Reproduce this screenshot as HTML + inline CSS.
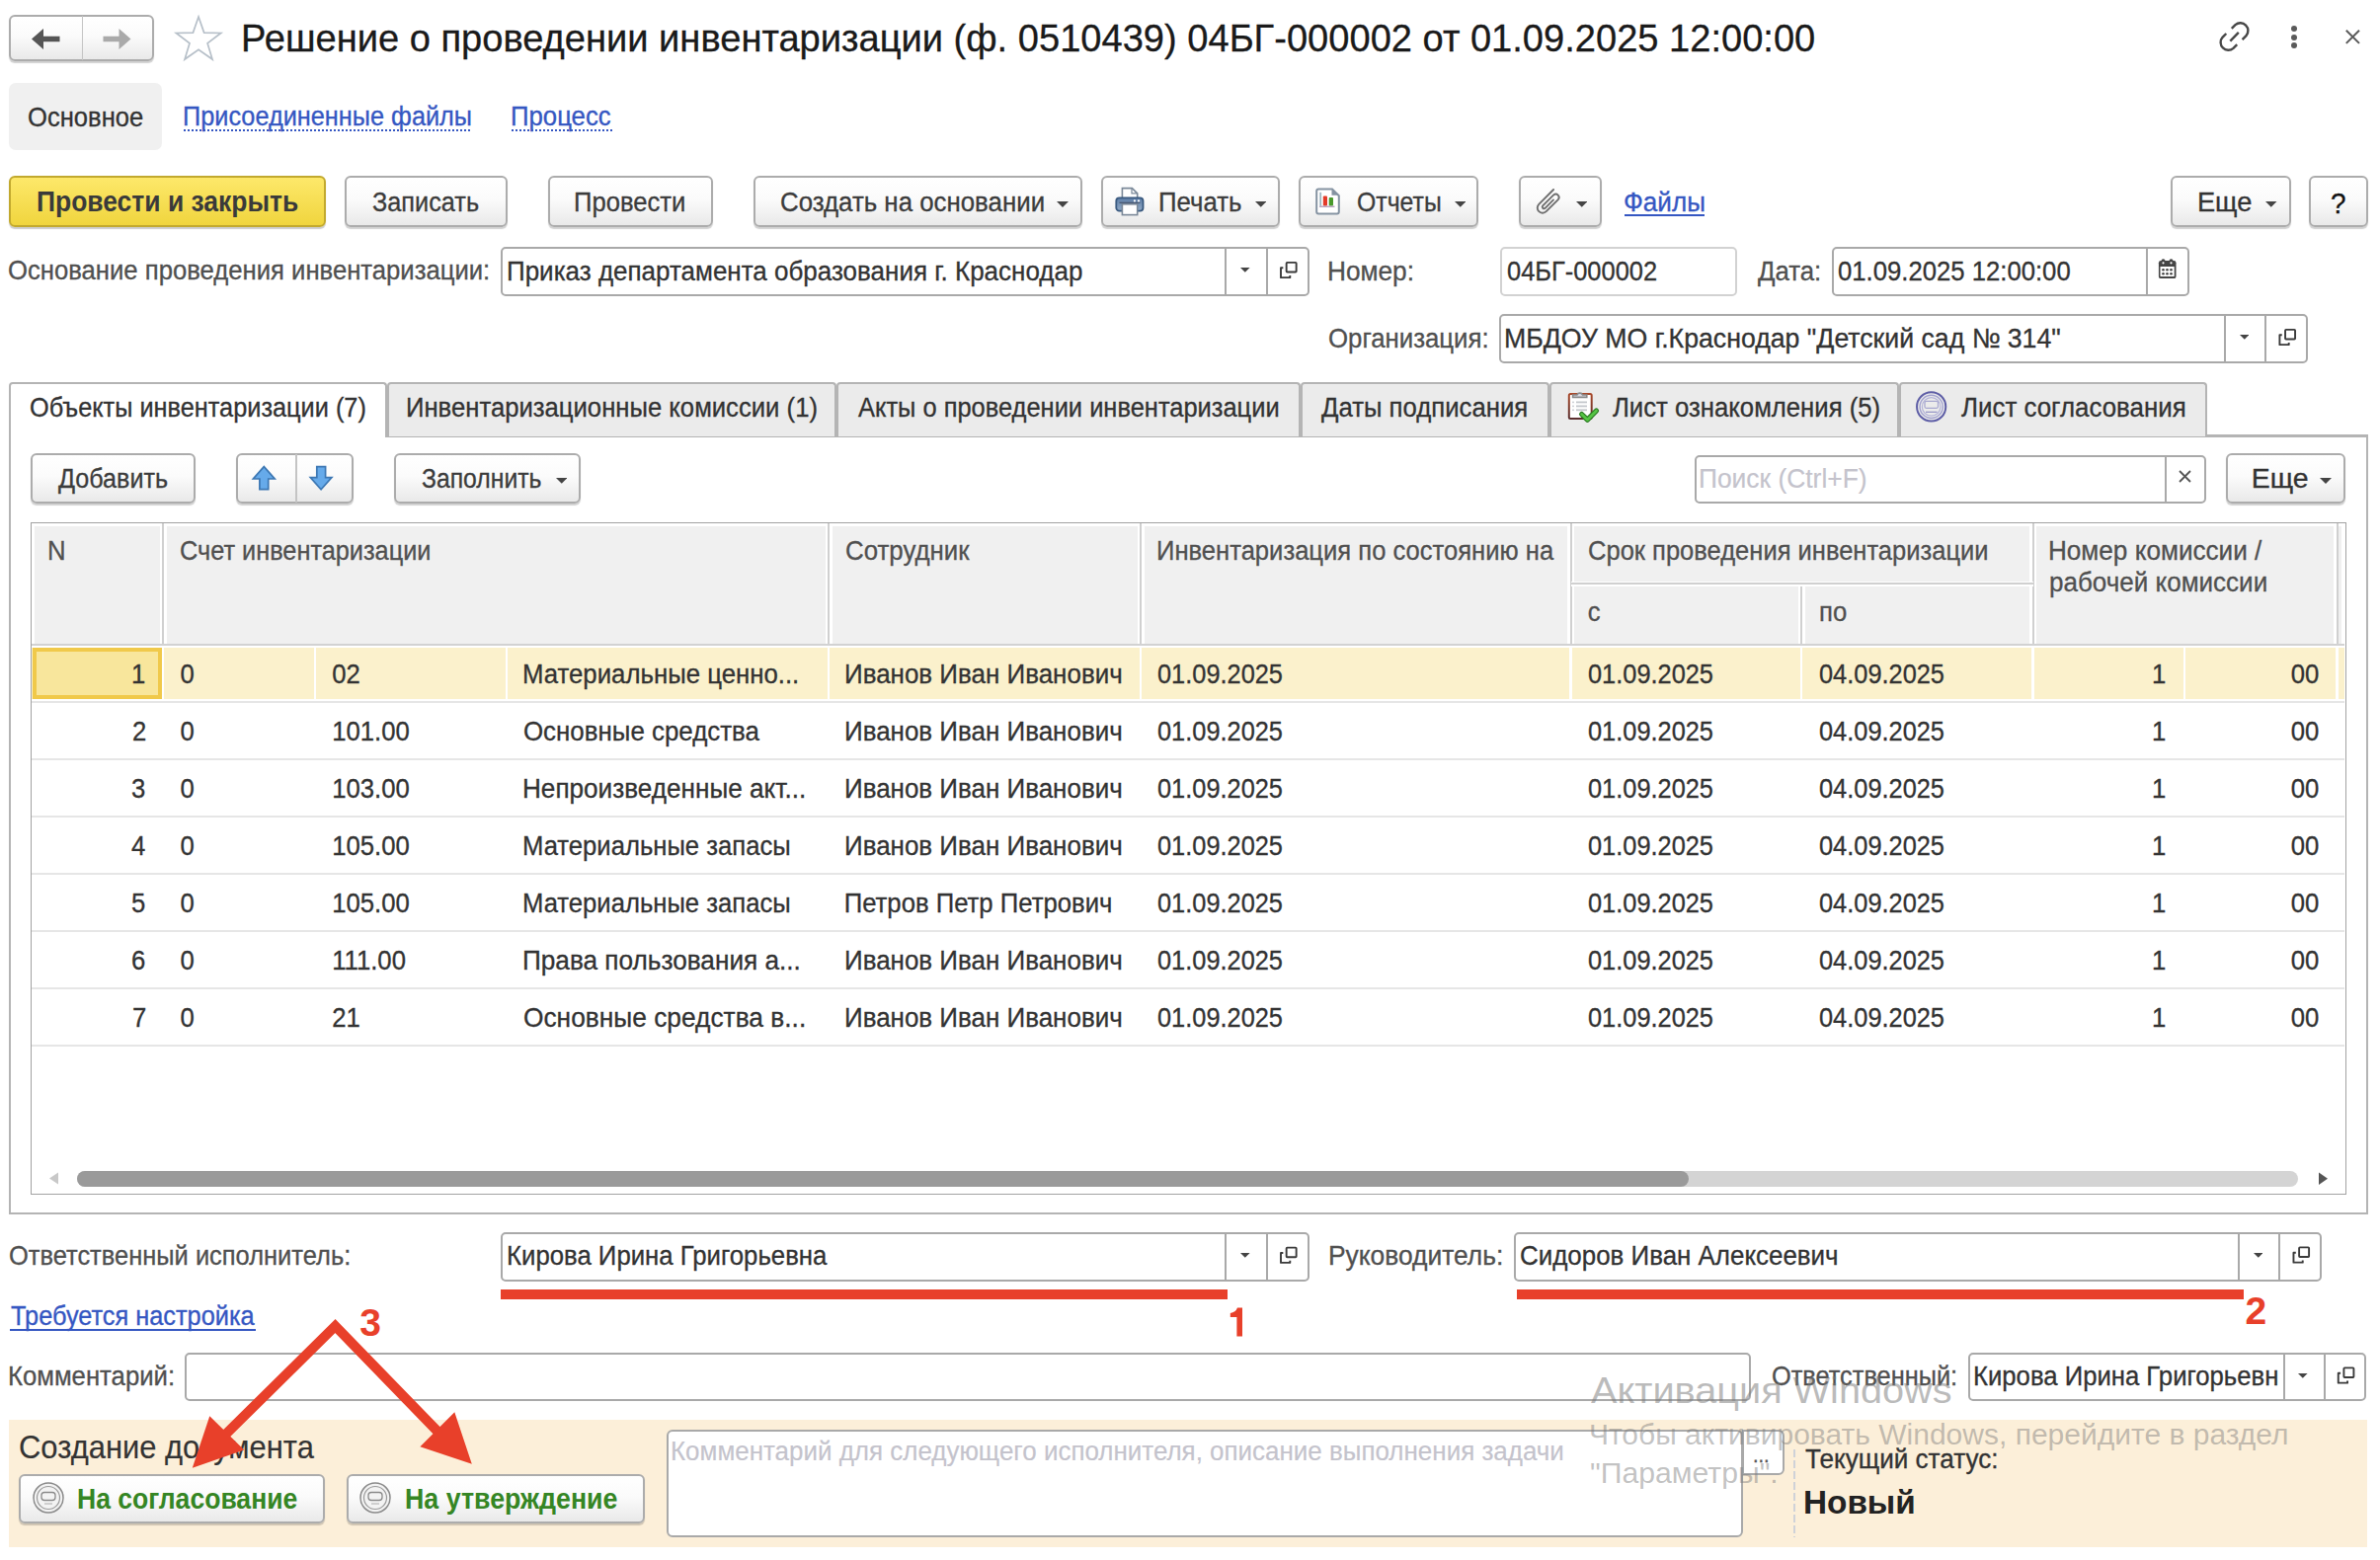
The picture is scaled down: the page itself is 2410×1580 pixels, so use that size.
<!DOCTYPE html>
<html><head><meta charset="utf-8"><title>1C</title>
<style>
html,body{margin:0;padding:0;background:#fff;width:2410px;height:1580px;overflow:hidden;position:relative}
.t{position:absolute;white-space:pre;line-height:1;font-family:"Liberation Sans", sans-serif;-webkit-text-stroke:0.3px currentColor}
</style></head><body>
<div style="position:absolute;left:9px;top:15px;width:147px;height:47px;box-sizing:border-box;border:2px solid #acacac;border-radius:6px;background:linear-gradient(#ffffff 0%,#fbfbfb 45%,#e9e9e9 100%);box-shadow:0 1.5px 1px rgba(0,0,0,0.18);"></div>
<div style="position:absolute;left:82.5px;top:16px;width:1.5px;height:45px;box-sizing:border-box;background:#c4c4c4"></div>
<svg style="position:absolute;left:30px;top:27px" width="34" height="26" viewBox="0 0 34 26"><path d="M2 12.5 L14 2 L14 9.8 L30.5 9.8 L30.5 15.2 L14 15.2 L14 23 Z" fill="#555"/></svg>
<svg style="position:absolute;left:103px;top:27px" width="34" height="26" viewBox="0 0 34 26"><path d="M29.5 12.5 L17.5 2 L17.5 9.8 L1.5 9.8 L1.5 15.2 L17.5 15.2 L17.5 23 Z" fill="#aaa"/></svg>
<svg style="position:absolute;left:0;top:0" width="260" height="80"><polygon points="201.05,17.00 206.65,33.10 223.69,33.45 210.10,43.74 215.04,60.05 201.05,50.32 187.06,60.05 192.00,43.74 178.41,33.45 195.45,33.10" fill="none" stroke="#b7c0c9" stroke-width="1.7" stroke-linejoin="miter"/></svg>
<span class="t" style="left:244.00px;top:19.93px;font-size:38.08px;font-weight:400;color:#1a1a1a;">Решение о проведении инвентаризации (ф. 0510439) 04БГ-000002 от 01.09.2025 12:00:00</span>
<svg style="position:absolute;left:0;top:0" width="2410" height="80" viewBox="0 0 2410 80"><g fill="none" stroke="#474747" stroke-width="2.4" stroke-linecap="butt"><path d="M2259.8 28.9 L2263.5 25.2 A7.8 7.8 0 0 1 2274.5 36.2 L2270.6 40.1"/><path d="M2265.2 45.1 L2261.5 48.8 A7.8 7.8 0 0 1 2250.5 37.8 L2254.3 34.0"/><path d="M2258.3 41.7 L2266.8 32.9"/></g></svg>
<div style="position:absolute;left:2319.5px;top:26.3px;width:6px;height:6px;border-radius:50%;background:#5a5a5a"></div>
<div style="position:absolute;left:2319.5px;top:34.5px;width:6px;height:6px;border-radius:50%;background:#5a5a5a"></div>
<div style="position:absolute;left:2319.5px;top:42.6px;width:6px;height:6px;border-radius:50%;background:#5a5a5a"></div>
<svg style="position:absolute;left:2370px;top:25px" width="26" height="26" viewBox="0 0 26 26"><path d="M5.8 5.7 L19 18.9 M19 5.7 L5.8 18.9" stroke="#5a5a5a" stroke-width="2"/></svg>
<div style="position:absolute;left:9px;top:84px;width:155px;height:68px;box-sizing:border-box;background:#f0f0f0;border-radius:7px"></div>
<span class="t" style="left:28.00px;top:106.85px;font-size:25.7px;font-weight:400;color:#333;transform:scale(0.9964,1.0800);transform-origin:1.00px 21.84px;">Основное</span>
<span class="t" style="left:185.00px;top:106.25px;font-size:25.7px;font-weight:400;color:#3557c2;transform:scale(0.9848,1.0800);transform-origin:2.00px 21.84px;">Присоединенные файлы</span>
<div style="position:absolute;left:186px;top:130.5px;width:291px;height:2.0px;box-sizing:border-box;background-image:linear-gradient(to right,#3557c2 50%,transparent 50%);background-size:4px 2px"></div>
<span class="t" style="left:517.00px;top:106.25px;font-size:25.7px;font-weight:400;color:#3557c2;transform:scale(1.0021,1.0800);transform-origin:2.00px 21.84px;">Процесс</span>
<div style="position:absolute;left:518px;top:130.5px;width:102px;height:2.0px;box-sizing:border-box;background-image:linear-gradient(to right,#3557c2 50%,transparent 50%);background-size:4px 2px"></div>
<div style="position:absolute;left:9px;top:178px;width:320.5px;height:52px;box-sizing:border-box;border:2px solid #c2a92e;border-radius:6px;background:linear-gradient(#fde86a,#f0d53e);box-shadow:0 1.5px 1px rgba(0,0,0,0.2)"></div>
<span class="t" style="left:36.80px;top:192.19px;font-size:26.6px;font-weight:700;color:#3a3a3a;transform:scale(0.9948,1.0900);transform-origin:1.00px 22.61px;-webkit-text-stroke:0;">Провести и закрыть</span>
<div style="position:absolute;left:349px;top:178px;width:164.5px;height:52px;box-sizing:border-box;border:2px solid #acacac;border-radius:6px;background:linear-gradient(#ffffff 0%,#fbfbfb 45%,#e9e9e9 100%);box-shadow:0 1.5px 1px rgba(0,0,0,0.18);"></div>
<span class="t" style="left:377.30px;top:192.96px;font-size:25.7px;font-weight:400;color:#3c3c3c;transform:scale(0.9845,1.0800);transform-origin:0.00px 21.84px;">Записать</span>
<div style="position:absolute;left:555px;top:178px;width:166.5px;height:52px;box-sizing:border-box;border:2px solid #acacac;border-radius:6px;background:linear-gradient(#ffffff 0%,#fbfbfb 45%,#e9e9e9 100%);box-shadow:0 1.5px 1px rgba(0,0,0,0.18);"></div>
<span class="t" style="left:581.00px;top:192.96px;font-size:25.7px;font-weight:400;color:#3c3c3c;transform:scale(0.9974,1.0800);transform-origin:2.00px 21.84px;">Провести</span>
<div style="position:absolute;left:763px;top:178px;width:332.5px;height:52px;box-sizing:border-box;border:2px solid #acacac;border-radius:6px;background:linear-gradient(#ffffff 0%,#fbfbfb 45%,#e9e9e9 100%);box-shadow:0 1.5px 1px rgba(0,0,0,0.18);"></div>
<span class="t" style="left:790.00px;top:192.96px;font-size:25.7px;font-weight:400;color:#3c3c3c;transform:scale(1.0059,1.0800);transform-origin:1.00px 21.84px;">Создать на основании</span>
<svg style="position:absolute;left:1070px;top:203.5px" width="12" height="7.0"><polygon points="0,0 12,0 6.0,6.0" fill="#444"/></svg>
<div style="position:absolute;left:1115px;top:178px;width:180.5px;height:52px;box-sizing:border-box;border:2px solid #acacac;border-radius:6px;background:linear-gradient(#ffffff 0%,#fbfbfb 45%,#e9e9e9 100%);box-shadow:0 1.5px 1px rgba(0,0,0,0.18);"></div>
<svg style="position:absolute;left:1129px;top:189px" width="30" height="31" viewBox="0 0 30 31"><defs><linearGradient id="prg" x1="0" y1="0" x2="0" y2="1"><stop offset="0" stop-color="#5f7fa8"/><stop offset="1" stop-color="#90a9c6"/></linearGradient></defs><path d="M7.4 11.4 V1.6 H17.4 L22.7 6.9 V11.4" fill="#fff" stroke="#7a8898" stroke-width="1.6"/><path d="M17 1.6 V6.9 H22.7" fill="none" stroke="#7a8898" stroke-width="1.2"/><rect x="1.3" y="11.4" width="27.2" height="13.2" rx="3.2" fill="url(#prg)" stroke="#39597f" stroke-width="1.8"/><path d="M4.5 16.3 H25.5" stroke="#4a5a74" stroke-width="1.4"/><circle cx="19.9" cy="14.4" r="1.1" fill="#fff"/><circle cx="24" cy="14.4" r="1.1" fill="#fff"/><rect x="7.4" y="17.8" width="15.3" height="10.8" fill="#fff" stroke="#7a8898" stroke-width="1.6"/></svg>
<span class="t" style="left:1173.00px;top:192.96px;font-size:25.7px;font-weight:400;color:#3c3c3c;transform:scale(1.0029,1.0800);transform-origin:2.00px 21.84px;">Печать</span>
<svg style="position:absolute;left:1270.5px;top:203.5px" width="11.5" height="6.75"><polygon points="0,0 11.5,0 5.75,5.75" fill="#444"/></svg>
<div style="position:absolute;left:1315px;top:178px;width:182px;height:52px;box-sizing:border-box;border:2px solid #acacac;border-radius:6px;background:linear-gradient(#ffffff 0%,#fbfbfb 45%,#e9e9e9 100%);box-shadow:0 1.5px 1px rgba(0,0,0,0.18);"></div>
<svg style="position:absolute;left:0;top:0" width="1700" height="240"><path d="M1335.2 191.4 H1349 L1355.8 198.2 V214.6 a2 2 0 0 1 -2 2 H1335.2 a2 2 0 0 1 -2 -2 V193.4 a2 2 0 0 1 2 -2 Z" fill="#fff" stroke="#8593a2" stroke-width="2"/><path d="M1348.5 191.5 V197.8 H1355.8 Z" fill="#8593a2"/><rect x="1336.3" y="194.8" width="1.8" height="13.8" fill="#9fb6c0"/><rect x="1339.8" y="198.4" width="4.2" height="10.2" rx="1" fill="#e33a28"/><rect x="1345.7" y="199.9" width="4.3" height="8.7" rx="1" fill="#4a9a2c"/><path d="M1336 209.2 H1351.5" stroke="#a890b0" stroke-width="1.2"/></svg>
<span class="t" style="left:1373.50px;top:192.96px;font-size:25.7px;font-weight:400;color:#3c3c3c;transform:scale(0.9649,1.0800);transform-origin:1.00px 21.84px;">Отчеты</span>
<svg style="position:absolute;left:1472.5px;top:203.5px" width="11.5" height="6.75"><polygon points="0,0 11.5,0 5.75,5.75" fill="#444"/></svg>
<div style="position:absolute;left:1538px;top:178px;width:83.5px;height:52px;box-sizing:border-box;border:2px solid #acacac;border-radius:6px;background:linear-gradient(#ffffff 0%,#fbfbfb 45%,#e9e9e9 100%);box-shadow:0 1.5px 1px rgba(0,0,0,0.18);"></div>
<svg style="position:absolute;left:0;top:0" width="1700" height="240"><path d="M1573.1 192 L1558.3 206.8 A5.2 5.2 0 0 0 1565.7 214.2 L1577.8 202.1 A3.3 3.3 0 0 0 1573.2 197.4 L1562.2 208.4 A1.7 1.7 0 0 0 1564.6 210.8 L1573.0 202.4" fill="none" stroke="#6e6e6e" stroke-width="1.9" stroke-linecap="round"/></svg>
<svg style="position:absolute;left:1595.5px;top:203.5px" width="11.5" height="6.75"><polygon points="0,0 11.5,0 5.75,5.75" fill="#444"/></svg>
<span class="t" style="left:1644.00px;top:192.96px;font-size:25.7px;font-weight:400;color:#3557c2;transform:scale(1.0158,1.0800);transform-origin:1.00px 21.84px;">Файлы</span>
<div style="position:absolute;left:1645px;top:216.5px;width:81px;height:2.0px;box-sizing:border-box;background:#3557c2"></div>
<div style="position:absolute;left:2198px;top:178px;width:121.5px;height:52px;box-sizing:border-box;border:2px solid #acacac;border-radius:6px;background:linear-gradient(#ffffff 0%,#fbfbfb 45%,#e9e9e9 100%);box-shadow:0 1.5px 1px rgba(0,0,0,0.18);"></div>
<span class="t" style="left:2225.00px;top:192.96px;font-size:25.7px;font-weight:400;color:#333;transform:scale(1.0604,1.0800);transform-origin:2.00px 21.84px;">Еще</span>
<svg style="position:absolute;left:2294px;top:204px" width="11.5" height="6.75"><polygon points="0,0 11.5,0 5.75,5.75" fill="#444"/></svg>
<div style="position:absolute;left:2338px;top:178px;width:59.5px;height:52px;box-sizing:border-box;border:2px solid #acacac;border-radius:6px;background:linear-gradient(#ffffff 0%,#fbfbfb 45%,#e9e9e9 100%);box-shadow:0 1.5px 1px rgba(0,0,0,0.18);"></div>
<span class="t" style="left:2360.00px;top:191.43px;font-size:29.5px;font-weight:400;color:#111;transform:scale(0.9467,1.0200);transform-origin:1.00px 25.07px;">?</span>
<span class="t" style="left:7.70px;top:262.46px;font-size:25.7px;font-weight:400;color:#505050;transform:scale(0.9991,1.0800);transform-origin:1.00px 21.84px;">Основание проведения инвентаризации:</span>
<div style="position:absolute;left:507px;top:250px;width:818.5px;height:50.0px;box-sizing:border-box;border:2px solid #a9a9a9;border-radius:5px;background:#fff;"></div>
<div style="position:absolute;left:1240px;top:250px;width:2px;height:50.0px;box-sizing:border-box;background:#a9a9a9"></div>
<div style="position:absolute;left:1282px;top:250px;width:2px;height:50.0px;box-sizing:border-box;background:#a9a9a9"></div>
<svg style="position:absolute;left:1256.2px;top:271.0px" width="9.599999999999909" height="5.7999999999999545"><polygon points="0,0 9.599999999999909,0 4.7999999999999545,4.7999999999999545" fill="#444"/></svg>
<svg style="position:absolute;left:0;top:0;overflow:visible" width="1" height="1"><rect x="1302.65" y="265.85" width="10" height="9.6" rx="0.8" fill="none" stroke="#3a3a3a" stroke-width="1.9"/><path d="M1299.35 271.25 H1297.0 V281.15 H1306.3 V278.9" fill="none" stroke="#3a3a3a" stroke-width="1.9" stroke-linejoin="round"/></svg>
<span class="t" style="left:513.20px;top:262.96px;font-size:25.7px;font-weight:400;color:#333;transform:scale(1.0121,1.0800);transform-origin:2.00px 21.84px;">Приказ департамента образования г. Краснодар</span>
<span class="t" style="left:1344.20px;top:262.96px;font-size:25.7px;font-weight:400;color:#505050;transform:scale(1.0211,1.0800);transform-origin:2.00px 21.84px;">Номер:</span>
<div style="position:absolute;left:1518.5px;top:250px;width:240.5px;height:50px;box-sizing:border-box;border:2px solid #d2d2d2;border-radius:5px;background:#fff"></div>
<span class="t" style="left:1526.40px;top:262.96px;font-size:25.7px;font-weight:400;color:#333;transform:scale(0.9899,1.0800);transform-origin:1.00px 21.84px;">04БГ-000002</span>
<span class="t" style="left:1780.00px;top:262.96px;font-size:25.7px;font-weight:400;color:#505050;transform:scale(1.0035,1.0800);transform-origin:0.00px 21.84px;">Дата:</span>
<div style="position:absolute;left:1854.5px;top:250px;width:362.5px;height:50px;box-sizing:border-box;border:2px solid #a9a9a9;border-radius:5px;background:#fff;"></div>
<div style="position:absolute;left:2173px;top:250px;width:2px;height:50px;box-sizing:border-box;background:#a9a9a9"></div>
<span class="t" style="left:1861.00px;top:262.96px;font-size:25.7px;font-weight:400;color:#333;transform:scale(1.0000,1.0800);transform-origin:1.00px 21.84px;">01.09.2025 12:00:00</span>
<svg style="position:absolute;left:2185px;top:260px" width="20" height="24" viewBox="0 0 20 24"><rect x="0.9" y="4.1" width="17.6" height="18" rx="2.2" fill="#454545"/><rect x="2.5" y="10" width="14.2" height="10.1" rx="0.6" fill="#fff"/><circle cx="5.5" cy="4.3" r="2" fill="#454545"/><circle cx="13.5" cy="4.3" r="2" fill="#454545"/><circle cx="5.5" cy="6.3" r="1.1" fill="#fff"/><circle cx="13.5" cy="6.3" r="1.1" fill="#fff"/><g fill="#454545"><circle cx="5.5" cy="13.2" r="1.3"/><circle cx="9.5" cy="13.2" r="1.3"/><circle cx="13.5" cy="13.2" r="1.3"/><circle cx="5.5" cy="17.2" r="1.3"/><circle cx="9.5" cy="17.2" r="1.3"/><circle cx="13.5" cy="17.2" r="1.3"/></g></svg>
<span class="t" style="left:1345.20px;top:331.15px;font-size:25.7px;font-weight:400;color:#505050;transform:scale(1.0036,1.0800);transform-origin:1.00px 21.84px;">Организация:</span>
<div style="position:absolute;left:1518.3px;top:318px;width:818.7px;height:50.0px;box-sizing:border-box;border:2px solid #a9a9a9;border-radius:5px;background:#fff;"></div>
<div style="position:absolute;left:2251.5px;top:318px;width:2.0px;height:50.0px;box-sizing:border-box;background:#a9a9a9"></div>
<div style="position:absolute;left:2293.3px;top:318px;width:2.0px;height:50.0px;box-sizing:border-box;background:#a9a9a9"></div>
<svg style="position:absolute;left:2267.6px;top:339.0px" width="9.600000000000364" height="5.800000000000182"><polygon points="0,0 9.600000000000364,0 4.800000000000182,4.800000000000182" fill="#444"/></svg>
<svg style="position:absolute;left:0;top:0;overflow:visible" width="1" height="1"><rect x="2314.05" y="333.85" width="10" height="9.6" rx="0.8" fill="none" stroke="#3a3a3a" stroke-width="1.9"/><path d="M2310.75 339.25 H2308.4 V349.15 H2317.7000000000003 V346.9" fill="none" stroke="#3a3a3a" stroke-width="1.9" stroke-linejoin="round"/></svg>
<span class="t" style="left:1523.40px;top:331.36px;font-size:25.7px;font-weight:400;color:#333;transform:scale(1.0390,1.0800);transform-origin:2.00px 21.84px;">МБДОУ МО г.Краснодар &quot;Детский сад № 314&quot;</span>
<div style="position:absolute;left:8.5px;top:441px;width:2389.0px;height:788.5px;box-sizing:border-box;border:2px solid #b4b4b4;border-top:none;background:#fff"></div>
<div style="position:absolute;left:390px;top:440px;width:2007.5px;height:2.5px;box-sizing:border-box;background:#b4b4b4"></div>
<div style="position:absolute;left:391.5px;top:386.5px;width:455.5px;height:55.5px;box-sizing:border-box;border:2px solid #b4b4b4;border-bottom:none;border-radius:4px 4px 0 0;background:#ebebeb"></div>
<span class="t" style="left:410.60px;top:401.15px;font-size:25.7px;font-weight:400;color:#333;transform:scale(0.9992,1.0800);transform-origin:2.00px 21.84px;">Инвентаризационные комиссии (1)</span>
<div style="position:absolute;left:847px;top:386.5px;width:470px;height:55.5px;box-sizing:border-box;border:2px solid #b4b4b4;border-bottom:none;border-radius:4px 4px 0 0;background:#ebebeb"></div>
<span class="t" style="left:868.70px;top:401.15px;font-size:25.7px;font-weight:400;color:#333;transform:scale(0.9909,1.0800);transform-origin:0.00px 21.84px;">Акты о проведении инвентаризации</span>
<div style="position:absolute;left:1317px;top:386.5px;width:252.29999999999995px;height:55.5px;box-sizing:border-box;border:2px solid #b4b4b4;border-bottom:none;border-radius:4px 4px 0 0;background:#ebebeb"></div>
<span class="t" style="left:1338.00px;top:401.15px;font-size:25.7px;font-weight:400;color:#333;transform:scale(1.0013,1.0800);transform-origin:0.00px 21.84px;">Даты подписания</span>
<div style="position:absolute;left:1569.3px;top:386.5px;width:353.70000000000005px;height:55.5px;box-sizing:border-box;border:2px solid #b4b4b4;border-bottom:none;border-radius:4px 4px 0 0;background:#ebebeb"></div>
<span class="t" style="left:1632.50px;top:401.15px;font-size:25.7px;font-weight:400;color:#333;transform:scale(1.0009,1.0800);transform-origin:0.00px 21.84px;">Лист ознакомления (5)</span>
<div style="position:absolute;left:1923px;top:386.5px;width:312px;height:55.5px;box-sizing:border-box;border:2px solid #b4b4b4;border-bottom:none;border-radius:4px 4px 0 0;background:#ebebeb"></div>
<span class="t" style="left:1985.60px;top:401.15px;font-size:25.7px;font-weight:400;color:#333;transform:scale(1.0078,1.0800);transform-origin:0.00px 21.84px;">Лист согласования</span>
<div style="position:absolute;left:8.5px;top:386.5px;width:383.0px;height:55.5px;box-sizing:border-box;border:2px solid #b4b4b4;border-bottom:none;border-radius:4px 4px 0 0;background:#fff"></div>
<span class="t" style="left:30.40px;top:401.15px;font-size:25.7px;font-weight:400;color:#333;transform:scale(0.9855,1.0800);transform-origin:1.00px 21.84px;">Объекты инвентаризации (7)</span>
<svg style="position:absolute;left:1580px;top:390px" width="50" height="45" viewBox="0 0 50 45"><defs><linearGradient id="cbg" x1="0" y1="0" x2="0" y2="1"><stop offset="0" stop-color="#a8482a"/><stop offset="1" stop-color="#5a2e2e"/></linearGradient></defs><rect x="8.8" y="9.1" width="22.9" height="24.9" rx="1.5" fill="#fff" stroke="url(#cbg)" stroke-width="2"/><path d="M12.6 12.4 H26.8 V10 H22.5 A3 3 0 0 0 16.9 10 H12.6 Z" fill="#dcdce6" stroke="#8a8a8a" stroke-width="1.6"/><g fill="#c4c8cc"><rect x="12.2" y="16.6" width="1.6" height="1.6"/><rect x="12.2" y="20.6" width="1.6" height="1.6"/><rect x="12.2" y="24.5" width="1.6" height="1.6"/><rect x="16" y="16.5" width="11" height="1.8"/><rect x="16" y="20.5" width="11" height="1.8"/><rect x="16" y="24.4" width="11" height="1.8"/></g><path d="M21.6 29.5 L27.4 35.2 L36.5 26" fill="none" stroke="#2a7a22" stroke-width="5.2" stroke-linecap="round" stroke-linejoin="round"/><path d="M21.6 29.5 L27.4 35.2 L36.5 26" fill="none" stroke="#55c444" stroke-width="2.8" stroke-linecap="round" stroke-linejoin="round"/></svg>
<svg style="position:absolute;left:1932px;top:390px" width="48" height="45" viewBox="0 0 48 45"><circle cx="23.65" cy="21.9" r="14.6" fill="none" stroke="#5e5ea6" stroke-width="2"/><circle cx="23.65" cy="21.9" r="11.6" fill="none" stroke="#a3a3cf" stroke-width="1.4"/><circle cx="23.65" cy="21.9" r="9.3" fill="none" stroke="#b4b4d8" stroke-width="1.2"/><rect x="17" y="16.3" width="13.5" height="7" rx="1.5" fill="none" stroke="#a8a8d0" stroke-width="1.3"/><path d="M18 27.3 H29.5" stroke="#9090c4" stroke-width="1.2"/></svg>
<div style="position:absolute;left:31px;top:458.5px;width:166.5px;height:51.5px;box-sizing:border-box;border:2px solid #acacac;border-radius:6px;background:linear-gradient(#ffffff 0%,#fbfbfb 45%,#e9e9e9 100%);box-shadow:0 1.5px 1px rgba(0,0,0,0.18);"></div>
<span class="t" style="left:58.60px;top:472.96px;font-size:25.7px;font-weight:400;color:#3c3c3c;transform:scale(0.9784,1.0800);transform-origin:0.00px 21.84px;">Добавить</span>
<div style="position:absolute;left:239px;top:458.5px;width:118.5px;height:51.5px;box-sizing:border-box;border:2px solid #acacac;border-radius:6px;background:linear-gradient(#ffffff 0%,#fbfbfb 45%,#e9e9e9 100%);box-shadow:0 1.5px 1px rgba(0,0,0,0.18);"></div>
<div style="position:absolute;left:299px;top:460px;width:1.5px;height:49px;box-sizing:border-box;background:#c4c4c4"></div>
<svg style="position:absolute;left:0;top:0" width="400" height="520"><g fill="#66aaea" stroke="#3c77b3" stroke-width="1.7" stroke-linejoin="miter"><path d="M267.3 472.6 L278.2 485 H271.7 V495.6 H262.9 V485 H256.4 Z"/><path d="M325.1 495.8 L335.9 483.6 H329.6 V472.7 H320.8 V483.6 H314.3 Z"/></g></svg>
<div style="position:absolute;left:399px;top:458.5px;width:188.5px;height:51.5px;box-sizing:border-box;border:2px solid #acacac;border-radius:6px;background:linear-gradient(#ffffff 0%,#fbfbfb 45%,#e9e9e9 100%);box-shadow:0 1.5px 1px rgba(0,0,0,0.18);"></div>
<span class="t" style="left:427.20px;top:472.96px;font-size:25.7px;font-weight:400;color:#3c3c3c;transform:scale(0.9632,1.0800);transform-origin:0.00px 21.84px;">Заполнить</span>
<svg style="position:absolute;left:562.5px;top:484px" width="11.5" height="6.75"><polygon points="0,0 11.5,0 5.75,5.75" fill="#444"/></svg>
<div style="position:absolute;left:1716.4px;top:460.5px;width:518.0999999999999px;height:49.0px;box-sizing:border-box;border:2px solid #a9a9a9;border-radius:5px;background:#fff;"></div>
<div style="position:absolute;left:2192px;top:460.5px;width:2px;height:49.0px;box-sizing:border-box;background:#a9a9a9"></div>
<span class="t" style="left:1720.40px;top:472.96px;font-size:25.7px;font-weight:400;color:#c4c3cc;transform:scale(1.0276,1.0800);transform-origin:2.00px 21.84px;-webkit-text-stroke:0.15px currentColor;">Поиск (Ctrl+F)</span>
<svg style="position:absolute;left:2205px;top:475px" width="15" height="15" viewBox="0 0 15 15"><path d="M2 2 L13 13 M13 2 L2 13" stroke="#555" stroke-width="1.8"/></svg>
<div style="position:absolute;left:2254px;top:458.5px;width:120.5px;height:51.5px;box-sizing:border-box;border:2px solid #acacac;border-radius:6px;background:linear-gradient(#ffffff 0%,#fbfbfb 45%,#e9e9e9 100%);box-shadow:0 1.5px 1px rgba(0,0,0,0.18);"></div>
<span class="t" style="left:2279.70px;top:472.96px;font-size:25.7px;font-weight:400;color:#333;transform:scale(1.1065,1.0800);transform-origin:2.00px 21.84px;">Еще</span>
<svg style="position:absolute;left:2349px;top:484px" width="12" height="7.0"><polygon points="0,0 12,0 6.0,6.0" fill="#444"/></svg>
<div style="position:absolute;left:30.5px;top:528.5px;width:2345.0px;height:681.0px;box-sizing:border-box;border:1.6px solid #a2a2a2;background:#fff"></div>
<div style="position:absolute;left:34.5px;top:532.5px;width:2336.5px;height:119.5px;box-sizing:border-box;background:#f0f0f0"></div>
<div style="position:absolute;left:32px;top:652px;width:2342px;height:2px;box-sizing:border-box;background:#d2d2d2"></div>
<div style="position:absolute;left:161.5px;top:530px;width:7.0px;height:122px;box-sizing:border-box;background:#fff"></div>
<div style="position:absolute;left:164px;top:530px;width:2px;height:122px;box-sizing:border-box;background:#d0d0d0"></div>
<div style="position:absolute;left:835.5px;top:530px;width:7.0px;height:122px;box-sizing:border-box;background:#fff"></div>
<div style="position:absolute;left:838px;top:530px;width:2px;height:122px;box-sizing:border-box;background:#d0d0d0"></div>
<div style="position:absolute;left:1151.5px;top:530px;width:7.0px;height:122px;box-sizing:border-box;background:#fff"></div>
<div style="position:absolute;left:1154px;top:530px;width:2px;height:122px;box-sizing:border-box;background:#d0d0d0"></div>
<div style="position:absolute;left:1587.0px;top:530px;width:7.0px;height:122px;box-sizing:border-box;background:#fff"></div>
<div style="position:absolute;left:1589.5px;top:530px;width:2.0px;height:122px;box-sizing:border-box;background:#d0d0d0"></div>
<div style="position:absolute;left:2055.1px;top:530px;width:7.0px;height:122px;box-sizing:border-box;background:#fff"></div>
<div style="position:absolute;left:2057.6px;top:530px;width:2.0px;height:122px;box-sizing:border-box;background:#d0d0d0"></div>
<div style="position:absolute;left:2363.1px;top:530px;width:7.0px;height:122px;box-sizing:border-box;background:#fff"></div>
<div style="position:absolute;left:2365.6px;top:530px;width:2.0px;height:122px;box-sizing:border-box;background:#d0d0d0"></div>
<div style="position:absolute;left:1820.5px;top:591px;width:7.0px;height:61px;box-sizing:border-box;background:#fff"></div>
<div style="position:absolute;left:1823px;top:591px;width:2px;height:61px;box-sizing:border-box;background:#d0d0d0"></div>
<div style="position:absolute;left:1590.5px;top:588.5px;width:468.0999999999999px;height:5.5px;box-sizing:border-box;background:#fff"></div>
<div style="position:absolute;left:1590.5px;top:590px;width:468.0999999999999px;height:2px;box-sizing:border-box;background:#d0d0d0"></div>
<div style="position:absolute;left:2368px;top:532.5px;width:3px;height:119.5px;box-sizing:border-box;background:#f0f0f0"></div>
<span class="t" style="left:47.90px;top:546.45px;font-size:25.7px;font-weight:400;color:#505050;transform:scale(1.0000,1.0800);transform-origin:2.00px 21.84px;">N</span>
<span class="t" style="left:181.80px;top:546.45px;font-size:25.7px;font-weight:400;color:#505050;transform:scale(0.9853,1.0800);transform-origin:1.00px 21.84px;">Счет инвентаризации</span>
<span class="t" style="left:855.70px;top:546.45px;font-size:25.7px;font-weight:400;color:#505050;transform:scale(1.0060,1.0800);transform-origin:1.00px 21.84px;">Сотрудник</span>
<span class="t" style="left:1170.80px;top:546.45px;font-size:25.7px;font-weight:400;color:#505050;transform:scale(0.9962,1.0800);transform-origin:2.00px 21.84px;">Инвентаризация по состоянию на</span>
<span class="t" style="left:1607.80px;top:546.45px;font-size:25.7px;font-weight:400;color:#505050;transform:scale(0.9936,1.0800);transform-origin:1.00px 21.84px;">Срок проведения инвентаризации</span>
<span class="t" style="left:1607.80px;top:608.36px;font-size:25.7px;font-weight:400;color:#505050;transform:scale(1.0000,1.0800);transform-origin:1.00px 21.84px;">с</span>
<span class="t" style="left:1842.00px;top:608.36px;font-size:25.7px;font-weight:400;color:#505050;transform:scale(1.0000,1.0800);transform-origin:1.00px 21.84px;">по</span>
<span class="t" style="left:2073.80px;top:546.45px;font-size:25.7px;font-weight:400;color:#505050;transform:scale(1.0173,1.0800);transform-origin:2.00px 21.84px;">Номер комиссии /</span>
<span class="t" style="left:2074.80px;top:578.25px;font-size:25.7px;font-weight:400;color:#505050;transform:scale(1.0129,1.0800);transform-origin:1.00px 21.84px;">рабочей комиссии</span>
<div style="position:absolute;left:32px;top:656px;width:2342px;height:52px;box-sizing:border-box;background:#fbf1cc"></div>
<div style="position:absolute;left:163.7px;top:656px;width:2.6000000000000227px;height:52px;box-sizing:border-box;background:#fff"></div>
<div style="position:absolute;left:317.7px;top:656px;width:2.6000000000000227px;height:52px;box-sizing:border-box;background:#fff"></div>
<div style="position:absolute;left:511.7px;top:656px;width:2.599999999999966px;height:52px;box-sizing:border-box;background:#fff"></div>
<div style="position:absolute;left:837.7px;top:656px;width:2.599999999999909px;height:52px;box-sizing:border-box;background:#fff"></div>
<div style="position:absolute;left:1153.7px;top:656px;width:2.599999999999909px;height:52px;box-sizing:border-box;background:#fff"></div>
<div style="position:absolute;left:1589.2px;top:656px;width:2.599999999999909px;height:52px;box-sizing:border-box;background:#fff"></div>
<div style="position:absolute;left:1822.7px;top:656px;width:2.599999999999909px;height:52px;box-sizing:border-box;background:#fff"></div>
<div style="position:absolute;left:2057.2999999999997px;top:656px;width:2.600000000000364px;height:52px;box-sizing:border-box;background:#fff"></div>
<div style="position:absolute;left:2210.7px;top:656px;width:2.600000000000364px;height:52px;box-sizing:border-box;background:#fff"></div>
<div style="position:absolute;left:2365.2999999999997px;top:656px;width:2.600000000000364px;height:52px;box-sizing:border-box;background:#fff"></div>
<div style="position:absolute;left:33px;top:656px;width:131px;height:52px;box-sizing:border-box;background:#f8e69c;border:4px solid #f0c94a"></div>
<div style="position:absolute;left:32px;top:710px;width:2342px;height:2px;box-sizing:border-box;background:#e6e6e6"></div>
<span class="t" style="left:133.00px;top:671.25px;font-size:25.7px;font-weight:400;color:#333;transform:scale(1.0000,1.0800);transform-origin:14.00px 21.84px;">1</span>
<span class="t" style="left:182.50px;top:671.25px;font-size:25.7px;font-weight:400;color:#333;transform:scale(1.0000,1.0800);transform-origin:1.00px 21.84px;">0</span>
<span class="t" style="left:336.20px;top:671.25px;font-size:25.7px;font-weight:400;color:#333;transform:scale(1.0000,1.0800);transform-origin:1.00px 21.84px;">02</span>
<span class="t" style="left:529.40px;top:671.25px;font-size:25.7px;font-weight:400;color:#333;transform:scale(1.0034,1.0800);transform-origin:2.00px 21.84px;">Материальные ценно...</span>
<span class="t" style="left:854.70px;top:671.25px;font-size:25.7px;font-weight:400;color:#333;transform:scale(1.0107,1.0800);transform-origin:2.00px 21.84px;">Иванов Иван Иванович</span>
<span class="t" style="left:1171.80px;top:671.25px;font-size:25.7px;font-weight:400;color:#333;transform:scale(0.9876,1.0800);transform-origin:1.00px 21.84px;">01.09.2025</span>
<span class="t" style="left:1607.80px;top:671.25px;font-size:25.7px;font-weight:400;color:#333;transform:scale(0.9876,1.0800);transform-origin:1.00px 21.84px;">01.09.2025</span>
<span class="t" style="left:1842.00px;top:671.25px;font-size:25.7px;font-weight:400;color:#333;transform:scale(0.9876,1.0800);transform-origin:1.00px 21.84px;">04.09.2025</span>
<span class="t" style="left:2179.00px;top:671.25px;font-size:25.7px;font-weight:400;color:#333;transform:scale(1.0000,1.0800);transform-origin:14.00px 21.84px;">1</span>
<span class="t" style="left:2319.71px;top:671.25px;font-size:25.7px;font-weight:400;color:#333;transform:scale(1.0000,1.0800);transform-origin:28.29px 21.84px;">00</span>
<div style="position:absolute;left:32px;top:768px;width:2342px;height:2px;box-sizing:border-box;background:#e6e6e6"></div>
<span class="t" style="left:134.00px;top:729.25px;font-size:25.7px;font-weight:400;color:#333;transform:scale(1.0000,1.0800);transform-origin:13.00px 21.84px;">2</span>
<span class="t" style="left:182.50px;top:729.25px;font-size:25.7px;font-weight:400;color:#333;transform:scale(1.0000,1.0800);transform-origin:1.00px 21.84px;">0</span>
<span class="t" style="left:336.20px;top:729.25px;font-size:25.7px;font-weight:400;color:#333;transform:scale(1.0000,1.0800);transform-origin:1.00px 21.84px;">101.00</span>
<span class="t" style="left:530.40px;top:729.25px;font-size:25.7px;font-weight:400;color:#333;transform:scale(1.0075,1.0800);transform-origin:1.00px 21.84px;">Основные средства</span>
<span class="t" style="left:854.70px;top:729.25px;font-size:25.7px;font-weight:400;color:#333;transform:scale(1.0107,1.0800);transform-origin:2.00px 21.84px;">Иванов Иван Иванович</span>
<span class="t" style="left:1171.80px;top:729.25px;font-size:25.7px;font-weight:400;color:#333;transform:scale(0.9876,1.0800);transform-origin:1.00px 21.84px;">01.09.2025</span>
<span class="t" style="left:1607.80px;top:729.25px;font-size:25.7px;font-weight:400;color:#333;transform:scale(0.9876,1.0800);transform-origin:1.00px 21.84px;">01.09.2025</span>
<span class="t" style="left:1842.00px;top:729.25px;font-size:25.7px;font-weight:400;color:#333;transform:scale(0.9876,1.0800);transform-origin:1.00px 21.84px;">04.09.2025</span>
<span class="t" style="left:2179.00px;top:729.25px;font-size:25.7px;font-weight:400;color:#333;transform:scale(1.0000,1.0800);transform-origin:14.00px 21.84px;">1</span>
<span class="t" style="left:2319.71px;top:729.25px;font-size:25.7px;font-weight:400;color:#333;transform:scale(1.0000,1.0800);transform-origin:28.29px 21.84px;">00</span>
<div style="position:absolute;left:32px;top:826px;width:2342px;height:2px;box-sizing:border-box;background:#e6e6e6"></div>
<span class="t" style="left:133.00px;top:787.25px;font-size:25.7px;font-weight:400;color:#333;transform:scale(1.0000,1.0800);transform-origin:14.00px 21.84px;">3</span>
<span class="t" style="left:182.50px;top:787.25px;font-size:25.7px;font-weight:400;color:#333;transform:scale(1.0000,1.0800);transform-origin:1.00px 21.84px;">0</span>
<span class="t" style="left:336.20px;top:787.25px;font-size:25.7px;font-weight:400;color:#333;transform:scale(1.0000,1.0800);transform-origin:1.00px 21.84px;">103.00</span>
<span class="t" style="left:529.40px;top:787.25px;font-size:25.7px;font-weight:400;color:#333;transform:scale(1.0178,1.0800);transform-origin:2.00px 21.84px;">Непроизведенные акт...</span>
<span class="t" style="left:854.70px;top:787.25px;font-size:25.7px;font-weight:400;color:#333;transform:scale(1.0107,1.0800);transform-origin:2.00px 21.84px;">Иванов Иван Иванович</span>
<span class="t" style="left:1171.80px;top:787.25px;font-size:25.7px;font-weight:400;color:#333;transform:scale(0.9876,1.0800);transform-origin:1.00px 21.84px;">01.09.2025</span>
<span class="t" style="left:1607.80px;top:787.25px;font-size:25.7px;font-weight:400;color:#333;transform:scale(0.9876,1.0800);transform-origin:1.00px 21.84px;">01.09.2025</span>
<span class="t" style="left:1842.00px;top:787.25px;font-size:25.7px;font-weight:400;color:#333;transform:scale(0.9876,1.0800);transform-origin:1.00px 21.84px;">04.09.2025</span>
<span class="t" style="left:2179.00px;top:787.25px;font-size:25.7px;font-weight:400;color:#333;transform:scale(1.0000,1.0800);transform-origin:14.00px 21.84px;">1</span>
<span class="t" style="left:2319.71px;top:787.25px;font-size:25.7px;font-weight:400;color:#333;transform:scale(1.0000,1.0800);transform-origin:28.29px 21.84px;">00</span>
<div style="position:absolute;left:32px;top:884px;width:2342px;height:2px;box-sizing:border-box;background:#e6e6e6"></div>
<span class="t" style="left:133.00px;top:845.25px;font-size:25.7px;font-weight:400;color:#333;transform:scale(1.0000,1.0800);transform-origin:14.00px 21.84px;">4</span>
<span class="t" style="left:182.50px;top:845.25px;font-size:25.7px;font-weight:400;color:#333;transform:scale(1.0000,1.0800);transform-origin:1.00px 21.84px;">0</span>
<span class="t" style="left:336.20px;top:845.25px;font-size:25.7px;font-weight:400;color:#333;transform:scale(1.0000,1.0800);transform-origin:1.00px 21.84px;">105.00</span>
<span class="t" style="left:529.40px;top:845.25px;font-size:25.7px;font-weight:400;color:#333;transform:scale(0.9984,1.0800);transform-origin:2.00px 21.84px;">Материальные запасы</span>
<span class="t" style="left:854.70px;top:845.25px;font-size:25.7px;font-weight:400;color:#333;transform:scale(1.0107,1.0800);transform-origin:2.00px 21.84px;">Иванов Иван Иванович</span>
<span class="t" style="left:1171.80px;top:845.25px;font-size:25.7px;font-weight:400;color:#333;transform:scale(0.9876,1.0800);transform-origin:1.00px 21.84px;">01.09.2025</span>
<span class="t" style="left:1607.80px;top:845.25px;font-size:25.7px;font-weight:400;color:#333;transform:scale(0.9876,1.0800);transform-origin:1.00px 21.84px;">01.09.2025</span>
<span class="t" style="left:1842.00px;top:845.25px;font-size:25.7px;font-weight:400;color:#333;transform:scale(0.9876,1.0800);transform-origin:1.00px 21.84px;">04.09.2025</span>
<span class="t" style="left:2179.00px;top:845.25px;font-size:25.7px;font-weight:400;color:#333;transform:scale(1.0000,1.0800);transform-origin:14.00px 21.84px;">1</span>
<span class="t" style="left:2319.71px;top:845.25px;font-size:25.7px;font-weight:400;color:#333;transform:scale(1.0000,1.0800);transform-origin:28.29px 21.84px;">00</span>
<div style="position:absolute;left:32px;top:942px;width:2342px;height:2px;box-sizing:border-box;background:#e6e6e6"></div>
<span class="t" style="left:133.00px;top:903.25px;font-size:25.7px;font-weight:400;color:#333;transform:scale(1.0000,1.0800);transform-origin:14.00px 21.84px;">5</span>
<span class="t" style="left:182.50px;top:903.25px;font-size:25.7px;font-weight:400;color:#333;transform:scale(1.0000,1.0800);transform-origin:1.00px 21.84px;">0</span>
<span class="t" style="left:336.20px;top:903.25px;font-size:25.7px;font-weight:400;color:#333;transform:scale(1.0000,1.0800);transform-origin:1.00px 21.84px;">105.00</span>
<span class="t" style="left:529.40px;top:903.25px;font-size:25.7px;font-weight:400;color:#333;transform:scale(0.9984,1.0800);transform-origin:2.00px 21.84px;">Материальные запасы</span>
<span class="t" style="left:854.70px;top:903.25px;font-size:25.7px;font-weight:400;color:#333;transform:scale(1.0000,1.0800);transform-origin:2.00px 21.84px;">Петров Петр Петрович</span>
<span class="t" style="left:1171.80px;top:903.25px;font-size:25.7px;font-weight:400;color:#333;transform:scale(0.9876,1.0800);transform-origin:1.00px 21.84px;">01.09.2025</span>
<span class="t" style="left:1607.80px;top:903.25px;font-size:25.7px;font-weight:400;color:#333;transform:scale(0.9876,1.0800);transform-origin:1.00px 21.84px;">01.09.2025</span>
<span class="t" style="left:1842.00px;top:903.25px;font-size:25.7px;font-weight:400;color:#333;transform:scale(0.9876,1.0800);transform-origin:1.00px 21.84px;">04.09.2025</span>
<span class="t" style="left:2179.00px;top:903.25px;font-size:25.7px;font-weight:400;color:#333;transform:scale(1.0000,1.0800);transform-origin:14.00px 21.84px;">1</span>
<span class="t" style="left:2319.71px;top:903.25px;font-size:25.7px;font-weight:400;color:#333;transform:scale(1.0000,1.0800);transform-origin:28.29px 21.84px;">00</span>
<div style="position:absolute;left:32px;top:1000px;width:2342px;height:2px;box-sizing:border-box;background:#e6e6e6"></div>
<span class="t" style="left:133.00px;top:961.25px;font-size:25.7px;font-weight:400;color:#333;transform:scale(1.0000,1.0800);transform-origin:14.00px 21.84px;">6</span>
<span class="t" style="left:182.50px;top:961.25px;font-size:25.7px;font-weight:400;color:#333;transform:scale(1.0000,1.0800);transform-origin:1.00px 21.84px;">0</span>
<span class="t" style="left:336.20px;top:961.25px;font-size:25.7px;font-weight:400;color:#333;transform:scale(1.0000,1.0800);transform-origin:1.00px 21.84px;">111.00</span>
<span class="t" style="left:529.40px;top:961.25px;font-size:25.7px;font-weight:400;color:#333;transform:scale(1.0195,1.0800);transform-origin:2.00px 21.84px;">Права пользования а...</span>
<span class="t" style="left:854.70px;top:961.25px;font-size:25.7px;font-weight:400;color:#333;transform:scale(1.0107,1.0800);transform-origin:2.00px 21.84px;">Иванов Иван Иванович</span>
<span class="t" style="left:1171.80px;top:961.25px;font-size:25.7px;font-weight:400;color:#333;transform:scale(0.9876,1.0800);transform-origin:1.00px 21.84px;">01.09.2025</span>
<span class="t" style="left:1607.80px;top:961.25px;font-size:25.7px;font-weight:400;color:#333;transform:scale(0.9876,1.0800);transform-origin:1.00px 21.84px;">01.09.2025</span>
<span class="t" style="left:1842.00px;top:961.25px;font-size:25.7px;font-weight:400;color:#333;transform:scale(0.9876,1.0800);transform-origin:1.00px 21.84px;">04.09.2025</span>
<span class="t" style="left:2179.00px;top:961.25px;font-size:25.7px;font-weight:400;color:#333;transform:scale(1.0000,1.0800);transform-origin:14.00px 21.84px;">1</span>
<span class="t" style="left:2319.71px;top:961.25px;font-size:25.7px;font-weight:400;color:#333;transform:scale(1.0000,1.0800);transform-origin:28.29px 21.84px;">00</span>
<div style="position:absolute;left:32px;top:1058px;width:2342px;height:2px;box-sizing:border-box;background:#e6e6e6"></div>
<span class="t" style="left:134.00px;top:1019.25px;font-size:25.7px;font-weight:400;color:#333;transform:scale(1.0000,1.0800);transform-origin:13.00px 21.84px;">7</span>
<span class="t" style="left:182.50px;top:1019.25px;font-size:25.7px;font-weight:400;color:#333;transform:scale(1.0000,1.0800);transform-origin:1.00px 21.84px;">0</span>
<span class="t" style="left:336.20px;top:1019.25px;font-size:25.7px;font-weight:400;color:#333;transform:scale(1.0000,1.0800);transform-origin:1.00px 21.84px;">21</span>
<span class="t" style="left:530.40px;top:1019.25px;font-size:25.7px;font-weight:400;color:#333;transform:scale(1.0248,1.0800);transform-origin:1.00px 21.84px;">Основные средства в...</span>
<span class="t" style="left:854.70px;top:1019.25px;font-size:25.7px;font-weight:400;color:#333;transform:scale(1.0107,1.0800);transform-origin:2.00px 21.84px;">Иванов Иван Иванович</span>
<span class="t" style="left:1171.80px;top:1019.25px;font-size:25.7px;font-weight:400;color:#333;transform:scale(0.9876,1.0800);transform-origin:1.00px 21.84px;">01.09.2025</span>
<span class="t" style="left:1607.80px;top:1019.25px;font-size:25.7px;font-weight:400;color:#333;transform:scale(0.9876,1.0800);transform-origin:1.00px 21.84px;">01.09.2025</span>
<span class="t" style="left:1842.00px;top:1019.25px;font-size:25.7px;font-weight:400;color:#333;transform:scale(0.9876,1.0800);transform-origin:1.00px 21.84px;">04.09.2025</span>
<span class="t" style="left:2179.00px;top:1019.25px;font-size:25.7px;font-weight:400;color:#333;transform:scale(1.0000,1.0800);transform-origin:14.00px 21.84px;">1</span>
<span class="t" style="left:2319.71px;top:1019.25px;font-size:25.7px;font-weight:400;color:#333;transform:scale(1.0000,1.0800);transform-origin:28.29px 21.84px;">00</span>
<svg style="position:absolute;left:49px;top:1187px" width="11" height="13" viewBox="0 0 11 13"><polygon points="10,0.5 10,12.5 1,6.5" fill="#c8c8c8"/></svg>
<div style="position:absolute;left:78px;top:1186px;width:2249px;height:16px;box-sizing:border-box;background:#d4d4d4;border-radius:8px"></div>
<div style="position:absolute;left:78px;top:1186px;width:1632px;height:16px;box-sizing:border-box;background:#9a9a9a;border-radius:8px"></div>
<svg style="position:absolute;left:2347px;top:1187px" width="11" height="14" viewBox="0 0 11 14"><polygon points="1,0.5 1,13 10,6.75" fill="#555"/></svg>
<span class="t" style="left:8.80px;top:1259.65px;font-size:25.7px;font-weight:400;color:#505050;transform:scale(0.9910,1.0800);transform-origin:1.00px 21.84px;">Ответственный исполнитель:</span>
<div style="position:absolute;left:507px;top:1248px;width:818.5px;height:49.5px;box-sizing:border-box;border:2px solid #a9a9a9;border-radius:5px;background:#fff;"></div>
<div style="position:absolute;left:1240px;top:1248px;width:2px;height:49.5px;box-sizing:border-box;background:#a9a9a9"></div>
<div style="position:absolute;left:1282px;top:1248px;width:2px;height:49.5px;box-sizing:border-box;background:#a9a9a9"></div>
<svg style="position:absolute;left:1256.2px;top:1268.75px" width="9.599999999999909" height="5.7999999999999545"><polygon points="0,0 9.599999999999909,0 4.7999999999999545,4.7999999999999545" fill="#444"/></svg>
<svg style="position:absolute;left:0;top:0;overflow:visible" width="1" height="1"><rect x="1302.65" y="1263.6" width="10" height="9.6" rx="0.8" fill="none" stroke="#3a3a3a" stroke-width="1.9"/><path d="M1299.35 1269.0 H1297.0 V1278.9 H1306.3 V1276.65" fill="none" stroke="#3a3a3a" stroke-width="1.9" stroke-linejoin="round"/></svg>
<span class="t" style="left:512.60px;top:1260.15px;font-size:25.7px;font-weight:400;color:#333;transform:scale(1.0023,1.0800);transform-origin:2.00px 21.84px;">Кирова Ирина Григорьевна</span>
<span class="t" style="left:1344.90px;top:1259.95px;font-size:25.7px;font-weight:400;color:#505050;transform:scale(1.0274,1.0800);transform-origin:2.00px 21.84px;">Руководитель:</span>
<div style="position:absolute;left:1533px;top:1247.5px;width:818px;height:50.0px;box-sizing:border-box;border:2px solid #a9a9a9;border-radius:5px;background:#fff;"></div>
<div style="position:absolute;left:2265.7px;top:1247.5px;width:2.0px;height:50.0px;box-sizing:border-box;background:#a9a9a9"></div>
<div style="position:absolute;left:2307.4px;top:1247.5px;width:2.0px;height:50.0px;box-sizing:border-box;background:#a9a9a9"></div>
<svg style="position:absolute;left:2281.75px;top:1268.5px" width="9.600000000000364" height="5.800000000000182"><polygon points="0,0 9.600000000000364,0 4.800000000000182,4.800000000000182" fill="#444"/></svg>
<svg style="position:absolute;left:0;top:0;overflow:visible" width="1" height="1"><rect x="2328.1" y="1263.35" width="10" height="9.6" rx="0.8" fill="none" stroke="#3a3a3a" stroke-width="1.9"/><path d="M2324.7999999999997 1268.75 H2322.45 V1278.65 H2331.75 V1276.4" fill="none" stroke="#3a3a3a" stroke-width="1.9" stroke-linejoin="round"/></svg>
<span class="t" style="left:1539.30px;top:1260.15px;font-size:25.7px;font-weight:400;color:#333;transform:scale(1.0091,1.0800);transform-origin:1.00px 21.84px;">Сидоров Иван Алексеевич</span>
<div style="position:absolute;left:507px;top:1306px;width:736px;height:10px;box-sizing:border-box;background:#e8402a"></div>
<div style="position:absolute;left:1536px;top:1306px;width:736px;height:10px;box-sizing:border-box;background:#e8402a"></div>
<svg style="position:absolute;left:0;top:0;overflow:visible" width="1" height="1"><path d="M1252.4 1353.4 V1334 H1245.8 V1329.9 Q1251.2 1329.4 1253 1324.6 H1258 V1353.4 Z" fill="#e8402a"/></svg>
<span class="t" style="left:2273.50px;top:1307.85px;font-size:39px;font-weight:700;color:#e8402a;-webkit-text-stroke:0;">2</span>
<span class="t" style="left:10.50px;top:1321.36px;font-size:25.7px;font-weight:400;color:#3557c2;transform:scale(0.9859,1.0800);transform-origin:0.00px 21.84px;">Требуется настройка</span>
<div style="position:absolute;left:10px;top:1345.5px;width:248.5px;height:2.0px;box-sizing:border-box;background:#3557c2"></div>
<span class="t" style="left:364.20px;top:1320.15px;font-size:39px;font-weight:700;color:#e8402a;-webkit-text-stroke:0;">3</span>
<span class="t" style="left:7.50px;top:1381.65px;font-size:25.7px;font-weight:400;color:#505050;transform:scale(1.0007,1.0800);transform-origin:2.00px 21.84px;">Комментарий:</span>
<div style="position:absolute;left:187px;top:1370px;width:1585.5px;height:49px;box-sizing:border-box;border:2px solid #a9a9a9;border-radius:5px;background:#fff;"></div>
<span class="t" style="left:1794.00px;top:1381.65px;font-size:25.7px;font-weight:400;color:#505050;transform:scale(0.9869,1.0800);transform-origin:1.00px 21.84px;">Ответственный:</span>
<div style="position:absolute;left:1992.7px;top:1370px;width:403.29999999999995px;height:49.0px;box-sizing:border-box;border:2px solid #a9a9a9;border-radius:5px;background:#fff;"></div>
<div style="position:absolute;left:2311.5px;top:1370px;width:2.0px;height:49.0px;box-sizing:border-box;background:#a9a9a9"></div>
<div style="position:absolute;left:2353px;top:1370px;width:2px;height:49.0px;box-sizing:border-box;background:#a9a9a9"></div>
<svg style="position:absolute;left:2327.45px;top:1390.5px" width="9.600000000000364" height="5.800000000000182"><polygon points="0,0 9.600000000000364,0 4.800000000000182,4.800000000000182" fill="#444"/></svg>
<svg style="position:absolute;left:0;top:0;overflow:visible" width="1" height="1"><rect x="2373.4" y="1385.35" width="10" height="9.6" rx="0.8" fill="none" stroke="#3a3a3a" stroke-width="1.9"/><path d="M2370.1 1390.75 H2367.75 V1400.65 H2377.05 V1398.4" fill="none" stroke="#3a3a3a" stroke-width="1.9" stroke-linejoin="round"/></svg>
<div style="position:absolute;left:1995px;top:1373px;width:2312px;height:44px;overflow:hidden;width:312px">
<span class="t" style="left:3.00px;top:8.66px;font-size:25.7px;font-weight:400;color:#333;transform:scale(1.0000,1.0800);transform-origin:2.00px 21.84px;">Кирова Ирина Григорьевна</span>
</div>
<div style="position:absolute;left:8.6px;top:1437.7px;width:2388.9px;height:129.29999999999995px;box-sizing:border-box;background:#fcefd9"></div>
<span class="t" style="left:19.00px;top:1451.15px;font-size:31px;font-weight:400;color:#333;transform:scale(0.9975,1.0600);transform-origin:1.00px 26.35px;-webkit-text-stroke:0.15px currentColor;">Создание документа</span>
<div style="position:absolute;left:19.4px;top:1493px;width:310.1px;height:50px;box-sizing:border-box;border:2px solid #acacac;border-radius:6px;background:linear-gradient(#ffffff 0%,#fbfbfb 45%,#e9e9e9 100%);box-shadow:0 1.5px 1px rgba(0,0,0,0.18);"></div>
<div style="position:absolute;left:351px;top:1493px;width:302px;height:50px;box-sizing:border-box;border:2px solid #acacac;border-radius:6px;background:linear-gradient(#ffffff 0%,#fbfbfb 45%,#e9e9e9 100%);box-shadow:0 1.5px 1px rgba(0,0,0,0.18);"></div>
<svg style="position:absolute;left:31.6px;top:1500px" width="34" height="34" viewBox="0 0 34 34"><circle cx="17" cy="17" r="15" fill="#f3f3f3" stroke="#8a8a8a" stroke-width="1.5"/><circle cx="17" cy="17" r="11.5" fill="none" stroke="#9a9a9a" stroke-width="1.2"/><rect x="10" y="11.5" width="14" height="8" rx="3" fill="none" stroke="#8a8a8a" stroke-width="1.3"/><path d="M13 23 H21" stroke="#aaa" stroke-width="1"/></svg>
<svg style="position:absolute;left:363px;top:1500px" width="34" height="34" viewBox="0 0 34 34"><circle cx="17" cy="17" r="15" fill="#f3f3f3" stroke="#8a8a8a" stroke-width="1.5"/><circle cx="17" cy="17" r="11.5" fill="none" stroke="#9a9a9a" stroke-width="1.2"/><rect x="10" y="11.5" width="14" height="8" rx="3" fill="none" stroke="#8a8a8a" stroke-width="1.3"/><path d="M13 23 H21" stroke="#aaa" stroke-width="1"/></svg>
<span class="t" style="left:78.40px;top:1505.89px;font-size:26.6px;font-weight:700;color:#358624;transform:scale(0.9989,1.0800);transform-origin:1.00px 22.61px;-webkit-text-stroke:0;">На согласование</span>
<span class="t" style="left:410.40px;top:1505.89px;font-size:26.6px;font-weight:700;color:#358624;transform:scale(1.0073,1.0800);transform-origin:1.00px 22.61px;-webkit-text-stroke:0;">На утверждение</span>
<div style="position:absolute;left:674.8px;top:1448px;width:1090.7px;height:109px;box-sizing:border-box;border:2px solid #a9a9a9;border-radius:6px;background:#fff"></div>
<span class="t" style="left:679.10px;top:1458.15px;font-size:25.7px;font-weight:400;color:#c4c3cc;transform:scale(1.0106,1.0800);transform-origin:2.00px 21.84px;-webkit-text-stroke:0.15px currentColor;">Комментарий для следующего исполнителя, описание выполнения задачи</span>
<div style="position:absolute;left:1763.5px;top:1448px;width:43.5px;height:46px;box-sizing:border-box;border:2px solid #a9a9a9;border-radius:0 6px 6px 0;background:#fff"></div>
<span class="t" style="left:1775.00px;top:1463.50px;font-size:20px;font-weight:400;color:#555;transform:scale(1.0000,1.0800);transform-origin:1.00px 17.00px;">...</span>
<div style="position:absolute;left:1816px;top:1468px;width:2px;height:89px;box-sizing:border-box;background-image:linear-gradient(#cfd2d8 70%,transparent 70%);background-size:2px 11px"></div>
<span class="t" style="left:1828.30px;top:1466.06px;font-size:25.7px;font-weight:400;color:#333;transform:scale(1.0154,1.0800);transform-origin:0.00px 21.84px;">Текущий статус:</span>
<span class="t" style="left:1826.30px;top:1505.34px;font-size:33.48px;font-weight:700;color:#222;transform:scale(0.9948,1.0000);transform-origin:2.00px 28.46px;-webkit-text-stroke:0;">Новый</span>
<svg style="position:absolute;left:0;top:0" width="2410" height="1580" viewBox="0 0 2410 1580">
<polyline points="215,1466 339.5,1343 455,1462" fill="none" stroke="#e8402a" stroke-width="10" stroke-linejoin="miter"/>
<polygon points="194.8,1486.7 212.3,1434.3 247.2,1468.6" fill="#e8402a"/>
<polygon points="477.8,1482.7 460.3,1430.3 425.4,1465.2" fill="#e8402a"/>
</svg>
<span class="t" style="left:1611.40px;top:1390.35px;font-size:37px;font-weight:400;color:rgba(120,120,120,0.5);transform:scale(1.0720,1.0000);transform-origin:0.00px 31.45px;-webkit-text-stroke:0;">Активация Windows</span>
<span class="t" style="left:1609.40px;top:1438.75px;font-size:29px;font-weight:400;color:rgba(120,120,120,0.45);transform:scale(1.0348,1.0000);transform-origin:2.00px 24.65px;-webkit-text-stroke:0;">Чтобы активировать Windows, перейдите в раздел</span>
<span class="t" style="left:1610.40px;top:1478.45px;font-size:29px;font-weight:400;color:rgba(120,120,120,0.45);transform:scale(1.0412,1.0000);transform-origin:1.00px 24.65px;-webkit-text-stroke:0;">&quot;Параметры&quot;.</span>
</body></html>
